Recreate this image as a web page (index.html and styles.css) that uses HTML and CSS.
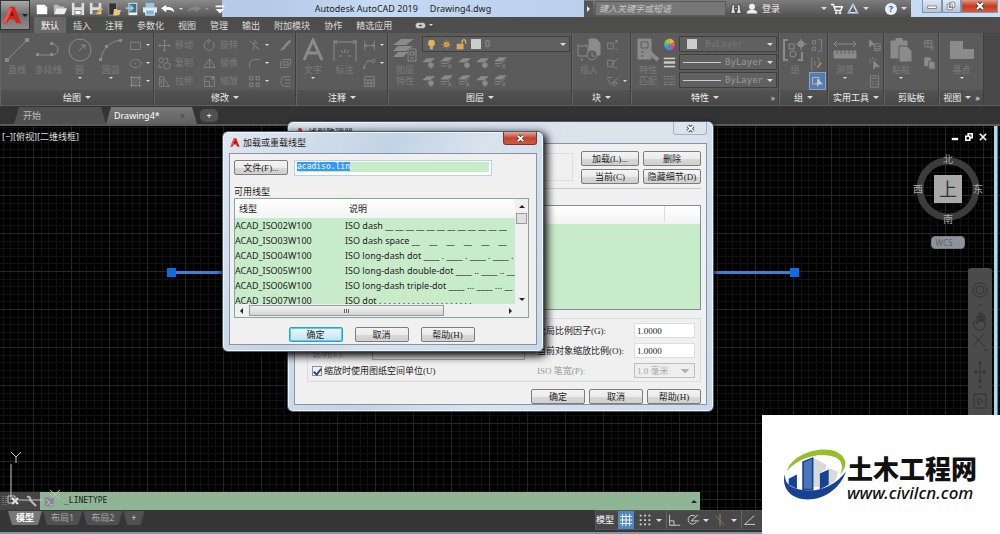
FILE: index.html
```html
<!DOCTYPE html>
<html lang="zh-CN">
<head>
  <meta charset="UTF-8">
  <meta name="viewport" content="width=device-width, initial-scale=1.0">
  <title>Autodesk AutoCAD 2019</title>
  <link rel="stylesheet" href="styles.css">
</head>
<body>
  <!-- icon sprite -->
  <svg class="sprite" aria-hidden="true">
    <symbol id="logo-a" viewBox="0 0 24 24"><path d="M1 22 9 2h6l8 20h-6l-2-5H9l-3 5z" fill="#d3241c"/><path d="M12 7l2 6h-4z" fill="#6b0f0c"/><path d="M9 2 1 22l4-1L12 5z" fill="#f0564a"/></symbol>
    <symbol id="line" viewBox="0 0 24 24"><path d="M2 22 22 2"/><path d="M0 20h4v4H0zM20 0h4v4h-4z" fill="currentColor" stroke="none"/></symbol>
    <symbol id="pline" viewBox="0 0 24 24"><path d="M2 17h14a5 5 0 0 0 1-11"/><path d="M0 15h3v3H0zM14 4h3v3h-3zM14 15h3v3h-3z" fill="currentColor" stroke="none"/></symbol>
    <symbol id="circle" viewBox="0 0 24 24"><circle cx="12" cy="12" r="11"/><path d="M11 13l6-6m-4 0h4v4"/></symbol>
    <symbol id="arc" viewBox="0 0 24 24"><path d="M2 22C3 11 11 3 22 2"/><path d="M0 20h3v3H0zM6 7h3v3H6zM20 1h3v3h-3z" fill="currentColor" stroke="none"/></symbol>
    <symbol id="rect" viewBox="0 0 16 16"><path d="M2 4h12v9H2z"/></symbol>
    <symbol id="ellipse" viewBox="0 0 16 16"><ellipse cx="8" cy="8" rx="7" ry="5"/><path d="M8 7v2"/></symbol>
    <symbol id="hatch" viewBox="0 0 16 16"><path d="M3 3h10v10H3zM1 3h14M1 13h14M3 1v14M13 1v14M4 8l4-4M4 12l8-8M8 12l4-4"/></symbol>
    <symbol id="move" viewBox="0 0 16 16"><path d="M8 1v14M1 8h14M6 3l2-2 2 2M6 13l2 2 2-2M3 6 1 8l2 2M13 6l2 2-2 2"/></symbol>
    <symbol id="rotate" viewBox="0 0 16 16"><path d="M12 4a6 6 0 1 1-5-2M6 0l3 2-3 3"/></symbol>
    <symbol id="trim" viewBox="0 0 16 16"><path d="M2 2l10 10M9 1 7 8M12 5H7M7 9l-1 5M9 9l5 4"/></symbol>
    <symbol id="brush" viewBox="0 0 16 16"><path d="M14 2 7 9" stroke-width="3"/><path d="M6 9l2 2-6 3z" fill="currentColor"/></symbol>
    <symbol id="copy" viewBox="0 0 16 16"><circle cx="4" cy="4" r="3"/><circle cx="11" cy="11" r="4"/><path d="M9 2h3v4M1 9v4h4"/></symbol>
    <symbol id="mirror" viewBox="0 0 16 16"><path d="M8 2v12M7 3 1 13h6M9 3l6 10H9"/></symbol>
    <symbol id="fillet" viewBox="0 0 16 16"><path d="M2 14V9a7 7 0 0 1 7-6h6"/></symbol>
    <symbol id="box" viewBox="0 0 16 16"><path d="M2 6l3-3h9v6l-3 4H2zM5 6h6v4H5z"/></symbol>
    <symbol id="stretch" viewBox="0 0 16 16"><path d="M2 2h5v12H2zM8 5l6 9H8M4 5v6"/></symbol>
    <symbol id="scale" viewBox="0 0 16 16"><path d="M2 2h12v12H2zM2 8h6v6M10 6l3-3M10 3h3v3"/></symbol>
    <symbol id="array" viewBox="0 0 16 16"><path d="M2 2h4v4H2zM10 2h4v4h-4zM2 10h4v4H2zM10 10h4v4h-4z"/></symbol>
    <symbol id="offset" viewBox="0 0 16 16"><path d="M14 2H7C1 2 1 14 7 14h7M14 6H7M14 10H7"/></symbol>
    <symbol id="text" viewBox="0 0 24 24"><path d="M3 22 12 2l9 20M6 15h12" stroke-width="3"/></symbol>
    <symbol id="dim" viewBox="0 0 24 24"><path d="M1 2v21M23 2v21M1 4h22M4 2 1 4l3 2M20 2l3 2-3 2M6 18h3M8 12l2 3M12 11v4M16 12l-2 3M15 18h3"/></symbol>
    <symbol id="dimlin" viewBox="0 0 16 16"><path d="M2 2v12M14 2v12M2 8h12M5 6 2 8l3 2M11 6l3 2-3 2"/></symbol>
    <symbol id="leader" viewBox="0 0 16 16"><path d="M1 14 5 5h6M1 10v4h3"/><circle cx="13" cy="5" r="2"/></symbol>
    <symbol id="grid" viewBox="0 0 16 16"><path d="M2 2h12v12H2zM2 6h12M2 10h12M6 6v8M10 6v8"/></symbol>
    <symbol id="layers" viewBox="0 0 24 24"><path d="M8 1h13l-8 6H0zM5 8h15l-7 5H0zM5 14h10l-5 5H0z" fill="currentColor" stroke="none"/><path d="M15 11h8v12h-8z" fill="#5b5b5b"/><path d="M17 14h4v3h-4zM17 20h4"/></symbol>
    <symbol id="layer" viewBox="0 0 16 16"><path d="M6 1h9l-5 4H1z" fill="currentColor"/><path d="M1 8h8l4-3M1 11h7M10 9l4 5M14 9l-4 5"/></symbol>
    <symbol id="layer2" viewBox="0 0 16 16"><path d="M6 2h9l-5 4H1z" fill="currentColor"/><circle cx="11" cy="10" r="3" fill="currentColor"/><path d="M11 13v2"/></symbol>
    <symbol id="insert" viewBox="0 0 24 24"><path d="M1 8h10v10H1zM1 6v2M9 6v2M5 20v3"/><path d="M12 1h7l4 4v12H12z" fill="currentColor"/><circle cx="15" cy="17" r="5" fill="#5b5b5b"/><path d="M15 14v4h3"/></symbol>
    <symbol id="block" viewBox="0 0 16 16"><path d="M2 5h7v7H2zM11 5l3-3M11 2h3v3M11 12l3 2"/></symbol>
    <symbol id="edit" viewBox="0 0 16 16"><path d="M2 4h7v8H2zM6 10l8-8M10 13h4"/></symbol>
    <symbol id="attr" viewBox="0 0 16 16"><path d="M1 3h7M2 5l4 7 9-9M9 8l5 2-4 4z"/></symbol>
    <symbol id="match" viewBox="0 0 24 24"><path d="M2 1h13v20H2z" fill="currentColor"/><path d="M5 4h7v6H5zM5 14h3M5 18h3" stroke="#5b5b5b"/><path d="M12 13l10 9" stroke-width="4"/></symbol>
    <symbol id="lines" viewBox="0 0 16 16"><path d="M1 3h14" stroke-width="2"/><path d="M1 8h14" stroke-width="3"/><path d="M1 13h14" stroke-width="2"/></symbol>
    <symbol id="dashes" viewBox="0 0 16 16"><path d="M1 3h14M1 6h14" stroke-dasharray="3 1"/><path d="M1 10h14M1 13h14" stroke-dasharray="5 1"/></symbol>
    <symbol id="wheel" viewBox="0 0 16 16"><g stroke="none"><path d="M8 8V1a7 7 0 0 1 6 4z" fill="#ffb02e"/><path d="M8 8l6-3a7 7 0 0 1 0 6z" fill="#f0643c"/><path d="M8 8l6 3a7 7 0 0 1-6 4z" fill="#c04fd0"/><path d="M8 8v7a7 7 0 0 1-6-4z" fill="#3f8fe8"/><path d="M8 8l-6 3a7 7 0 0 1 0-6z" fill="#35c4a0"/><path d="M8 8 2 5a7 7 0 0 1 6-4z" fill="#8ed43a"/></g></symbol>
    <symbol id="group" viewBox="0 0 24 24"><path d="M5 2H1v20h4M15 22h4v-8" stroke-width="2"/><path d="M6 6h5v5H6zM18 1v11M13 6h11"/><circle cx="18" cy="6" r="3" fill="currentColor"/><circle cx="10" cy="16" r="3"/></symbol>
    <symbol id="ungroup" viewBox="0 0 16 16"><path d="M3 2h4v4H3zM3 10h4v4H3zM10 1h4v14h-4"/></symbol>
    <symbol id="gedit" viewBox="0 0 16 16"><path d="M4 1H2v14h2M9 1h2v7M6 4v7"/><path d="M14 7l-5 6" stroke="#a89262" stroke-width="2"/></symbol>
    <symbol id="gsel" viewBox="0 0 16 16"><path d="M2 3h8v8H2z"/><path d="M8 5l6 6H9l-1 3z" fill="currentColor"/></symbol>
    <symbol id="measure" viewBox="0 0 24 24"><path d="M1 6h22M4 3 1 6l3 3M20 3l3 3-3 3"/><path d="M1 13h22v7H1z" fill="currentColor"/><path d="M4 13v3M8 13v3M12 13v3M16 13v3M20 13v3" stroke="#5b5b5b"/></symbol>
    <symbol id="qsel" viewBox="0 0 16 16"><path d="M2 1l6 6H4l-2 3z" fill="currentColor"/><path d="M8 6h7v8H8zM8 9h7M8 12h7"/></symbol>
    <symbol id="pick" viewBox="0 0 16 16"><path d="M7 5l7 7H9l-2 3z" fill="currentColor"/><path d="M6 0v3M1 6h3M2 2l2 2M10 2 9 4"/></symbol>
    <symbol id="calc" viewBox="0 0 16 16"><path d="M3 1h10v14H3zM5 4h6M5 8h2M9 8h2M5 11h2M9 11h2"/></symbol>
    <symbol id="paste" viewBox="0 0 24 24"><path d="M2 3h16v17H2zM7 0h6v4H7z" fill="currentColor"/><path d="M10 8h8l5 5v11H10z" fill="currentColor" stroke="#5b5b5b"/></symbol>
    <symbol id="cut" viewBox="0 0 16 16"><path d="M2 2h9v8H2zM2 5h9M6 2v8M9 9l5 5M14 9l-5 5"/></symbol>
    <symbol id="copyclip" viewBox="0 0 16 16"><path d="M2 1h7v10H2z" fill="currentColor"/><path d="M7 5h5l3 3v7H7z" fill="currentColor" stroke="#5b5b5b"/></symbol>
    <symbol id="base" viewBox="0 0 24 24"><path d="M0 3h13v8h11v10H0z" fill="currentColor" stroke="none"/></symbol>
    <symbol id="close-x" viewBox="0 0 10 10"><path d="M2 2l6 6M8 2 2 8" stroke="#444" stroke-width="4"/><path d="M2 2l6 6M8 2 2 8" stroke="#fff" stroke-width="2"/></symbol>
  </svg>

  <header class="app-header">
    <button class="app-button" aria-label="应用程序菜单"><svg><use href="#logo-a"/></svg><i class="caret dark"></i></button>
    <div class="header-rows">
      <div class="titlebar">
        <div class="quick-access">
          <button aria-label="新建"><svg viewBox="0 0 16 16"><path d="M2 3h9l3 3v8H2z" fill="#fff"/></svg></button>
          <button aria-label="打开"><svg viewBox="0 0 16 16"><path d="M1 3h5l1 2h6v2H4l-3 6z" fill="#bbb"/><path d="M4 7h12l-3 7H1z" fill="#eee"/></svg></button>
          <button aria-label="保存"><svg viewBox="0 0 16 16"><path d="M1 1h14v14H1z" fill="#ddd"/><path d="M4 1h8v5H4zM4 9h8v6H4z" fill="#777"/><path d="M5 10h6v4H5z" fill="#fff"/></svg></button>
          <button aria-label="另存为"><svg viewBox="0 0 16 16"><path d="M1 1h13v13H1z" fill="#ddd"/><path d="M4 1h7v5H4zM4 9h7v5H4z" fill="#777"/><path d="M15 7 9 14" stroke="#e0a850" stroke-width="3"/></svg></button>
          <button aria-label="从移动端打开"><svg viewBox="0 0 16 16"><path d="M2 1h9v14H2z" fill="#333" stroke="#999"/><path d="M8 8h3l1 1h4l-2 6H7z" fill="#efc77c"/></svg></button>
          <button aria-label="保存到移动端"><svg viewBox="0 0 16 16"><path d="M4 1h10v14H4z" fill="#eee"/><path d="M5 2h8v10H5z" fill="#457084"/><path d="M1 7h8M6 4l3 3-3 3" stroke="#8ad0f0" stroke-width="2" fill="none"/></svg></button>
          <button aria-label="打印"><svg viewBox="0 0 16 16"><path d="M3 1h10v5H3z" fill="#8cc6ec"/><path d="M0 6h16v6H0z" fill="#e4e4e4"/><path d="M3 9h10v6H3z" fill="#78b4dc" stroke="#fff"/></svg></button>
          <button aria-label="放弃"><svg viewBox="0 0 16 16"><path d="M6 3v3c6-1 9 2 9 6-2-3-5-3-9-3v3L0 7z" fill="#fff"/></svg></button>
          <i class="caret"></i>
          <button aria-label="重做"><svg viewBox="0 0 16 16"><path d="M10 3v3C4 5 1 8 1 12c2-3 5-3 9-3v3l6-5z" fill="#858585"/></svg></button>
          <i class="caret dim"></i>
          <button aria-label="自定义"><svg viewBox="0 0 16 16"><path d="M3 4h10v2H3zM3 8h10l-5 5z" fill="#fff"/></svg></button>
        </div>
        <div class="app-title"><span>Autodesk AutoCAD 2019</span><span>Drawing4.dwg</span></div>
        <div class="info-center">
          <button class="info-arrow" aria-label="展开"><i class="caret right"></i></button>
          <input class="search" type="text" placeholder="键入关键字或短语" aria-label="搜索">
          <button aria-label="搜索按钮"><svg viewBox="0 0 16 16"><path d="M3 2h3l1 12H1zM10 2h3l2 12H9zM6 6h4v3H6z" fill="#ddd" stroke="#333"/></svg></button>
          <button class="login"><svg viewBox="0 0 16 16"><circle cx="8" cy="5" r="4" fill="#eee"/><path d="M1 14c0-4 3-5 7-5s7 1 7 5z" fill="#eee"/></svg>登录</button>
          <i class="caret push"></i>
          <button aria-label="商店"><svg viewBox="0 0 16 16" fill="none"><path d="M0 2h3l3 8h7l2-5H5" stroke="#fff" stroke-width="2"/><circle cx="7" cy="13" r="2" fill="#ddd"/><circle cx="12" cy="13" r="2" fill="#ddd"/></svg></button>
          <button aria-label="连接"><svg viewBox="0 0 16 16" fill="none"><path d="M8 2 2 13h12z" stroke="#dce6f4" stroke-width="2"/><circle cx="8" cy="3" r="2" fill="#9cb8e0"/><circle cx="3" cy="12" r="2" fill="#9cb8e0"/><circle cx="13" cy="12" r="2" fill="#9cb8e0"/></svg></button>
          <i class="caret"></i>
          <button class="help" aria-label="帮助">?</button>
          <i class="caret"></i>
        </div>
        <div class="window-buttons">
          <button aria-label="最小化"><svg viewBox="0 0 16 16"><path d="M1 8h14v4H1z" fill="#fff" stroke="#555"/></svg></button>
          <button aria-label="还原"><svg viewBox="0 0 16 16"><path d="M6 2h8v8H6zM2 5h8v9H2zM5 8h2v3H5z" fill="#fff" stroke="#555"/></svg></button>
          <button class="close" aria-label="关闭"><svg><use href="#close-x"/></svg></button>
        </div>
      </div>
      <nav class="ribbon-tabs">
        <a href="#" class="active">默认</a><a href="#">插入</a><a href="#">注释</a><a href="#">参数化</a><a href="#">视图</a><a href="#">管理</a><a href="#">输出</a><a href="#">附加模块</a><a href="#">协作</a><a href="#">精选应用</a>
        <button class="tab-toggle" aria-label="最小化功能区"><svg viewBox="0 0 16 10"><path d="M3 1h10l2 3v2l-2 3H3L1 6V4z" fill="#ccc"/><path d="M6 4h4v2H6z" fill="#444"/></svg><i class="caret"></i></button>
      </nav>
    </div>
  </header>

  <div class="ribbon">
    <section class="panel">
      <div class="panel-body">
        <button class="tool"><svg><use href="#line"/></svg>直线</button>
        <button class="tool"><svg><use href="#pline"/></svg>多段线</button>
        <button class="tool"><svg><use href="#circle"/></svg>圆<i class="caret"></i></button>
        <button class="tool"><svg><use href="#arc"/></svg>圆弧<i class="caret"></i></button>
        <div class="stack">
          <button aria-label="矩形"><svg><use href="#rect"/></svg><i class="caret"></i></button>
          <button aria-label="椭圆"><svg><use href="#ellipse"/></svg><i class="caret"></i></button>
          <button aria-label="图案填充"><svg><use href="#hatch"/></svg><i class="caret"></i></button>
        </div>
      </div>
      <h2>绘图<i class="caret"></i></h2>
    </section>
    <section class="panel">
      <div class="panel-body">
        <div class="stack">
          <button><svg><use href="#move"/></svg>移动</button>
          <button><svg><use href="#copy"/></svg>复制</button>
          <button><svg><use href="#stretch"/></svg>拉伸</button>
        </div>
        <div class="stack">
          <button><svg><use href="#rotate"/></svg>旋转</button>
          <button><svg><use href="#mirror"/></svg>镜像</button>
          <button><svg><use href="#scale"/></svg>缩放</button>
        </div>
        <div class="stack">
          <button aria-label="修剪"><svg><use href="#trim"/></svg><i class="caret"></i></button>
          <button aria-label="圆角"><svg><use href="#fillet"/></svg><i class="caret"></i></button>
          <button aria-label="阵列"><svg><use href="#array"/></svg><i class="caret"></i></button>
        </div>
        <div class="stack">
          <button aria-label="删除对象"><svg><use href="#brush"/></svg></button>
          <button aria-label="分解"><svg><use href="#box"/></svg></button>
          <button aria-label="偏移"><svg><use href="#offset"/></svg></button>
        </div>
      </div>
      <h2>修改<i class="caret"></i></h2>
    </section>
    <section class="panel">
      <div class="panel-body">
        <button class="tool"><svg><use href="#text"/></svg>文字<i class="caret"></i></button>
        <button class="tool"><svg><use href="#dim"/></svg>标注</button>
        <div class="stack">
          <button aria-label="线性"><svg><use href="#dimlin"/></svg><i class="caret"></i></button>
          <button aria-label="引线"><svg><use href="#leader"/></svg><i class="caret"></i></button>
          <button aria-label="表格"><svg><use href="#grid"/></svg></button>
        </div>
      </div>
      <h2>注释<i class="caret"></i></h2>
    </section>
    <section class="panel">
      <div class="panel-body">
        <button class="tool"><svg><use href="#layers"/></svg>图层<br>特性</button>
        <div class="layer-tools">
          <button class="combo">
            <svg viewBox="0 0 16 16"><circle cx="8" cy="6" r="5" fill="#e8b24e"/><path d="M6 11h4v4H6z" fill="#bbb"/></svg>
            <svg viewBox="0 0 16 16"><circle cx="8" cy="8" r="4" fill="#e8a040"/><path d="M8 1v14M1 8h14M3 3l10 10M13 3 3 13" stroke="#c89040"/></svg>
            <svg viewBox="0 0 16 16"><path d="M1 7h10v8H1z" fill="#d8a860"/><path d="M9 7V4c0-4 5-4 5 0v3" fill="none" stroke="#d8a860" stroke-width="2"/></svg>
            <i class="swatch"></i><span>0</span><i class="caret"></i>
          </button>
          <div class="icon-row">
            <button aria-label="关"><svg><use href="#layer2"/></svg></button>
            <button aria-label="隔离"><svg><use href="#layer"/></svg></button>
            <button aria-label="冻结"><svg><use href="#layer2"/></svg></button>
            <button aria-label="锁定"><svg><use href="#layer2"/></svg></button>
            <button aria-label="置为当前"><svg><use href="#layer"/></svg></button>
          </div>
          <div class="icon-row">
            <button aria-label="打开所有图层"><svg><use href="#layer2"/></svg></button>
            <button aria-label="取消隔离"><svg><use href="#layer"/></svg></button>
            <button aria-label="解冻"><svg><use href="#layer"/></svg></button>
            <button aria-label="解锁"><svg><use href="#layer2"/></svg></button>
            <button aria-label="匹配图层"><svg><use href="#layer"/></svg></button>
          </div>
        </div>
      </div>
      <h2>图层<i class="caret"></i></h2>
    </section>
    <section class="panel">
      <div class="panel-body">
        <button class="tool"><svg><use href="#insert"/></svg>插入</button>
        <div class="stack">
          <button aria-label="创建块"><svg><use href="#block"/></svg></button>
          <button aria-label="编辑块"><svg><use href="#edit"/></svg></button>
          <button aria-label="编辑属性"><svg><use href="#attr"/></svg><i class="caret"></i></button>
        </div>
      </div>
      <h2>块<i class="caret"></i></h2>
    </section>
    <section class="panel">
      <div class="panel-body">
        <button class="tool"><svg><use href="#match"/></svg>特性<br>匹配</button>
        <div class="props">
          <svg><use href="#wheel"/></svg>
          <button class="combo off"><i class="swatch"></i><span class="mono">ByLayer</span><i class="caret"></i></button>
          <svg class="bright"><use href="#lines"/></svg>
          <button class="combo"><i class="rule"></i><span class="mono">ByLayer</span><i class="caret"></i></button>
          <svg><use href="#dashes"/></svg>
          <button class="combo"><i class="rule"></i><span class="mono">ByLayer</span><i class="caret"></i></button>
        </div>
      </div>
      <h2>特性<i class="caret"></i><i class="launcher">»</i></h2>
    </section>
    <section class="panel">
      <div class="panel-body">
        <button class="tool"><svg><use href="#group"/></svg>组</button>
        <div class="stack">
          <button aria-label="解除编组"><svg><use href="#ungroup"/></svg></button>
          <button aria-label="组编辑"><svg><use href="#gedit"/></svg></button>
          <button class="selected" aria-label="启用组选择"><svg><use href="#gsel"/></svg></button>
        </div>
      </div>
      <h2>组<i class="caret"></i></h2>
    </section>
    <section class="panel">
      <div class="panel-body">
        <button class="tool"><svg><use href="#measure"/></svg>测量<i class="caret"></i></button>
        <div class="stack">
          <button aria-label="快速选择"><svg><use href="#qsel"/></svg></button>
          <button aria-label="点选"><svg><use href="#pick"/></svg></button>
          <button aria-label="计算器"><svg><use href="#calc"/></svg></button>
        </div>
      </div>
      <h2>实用工具<i class="caret"></i></h2>
    </section>
    <section class="panel">
      <div class="panel-body">
        <button class="tool"><svg><use href="#paste"/></svg>粘贴<i class="caret"></i></button>
        <div class="stack">
          <button aria-label="剪切"><svg><use href="#cut"/></svg></button>
          <button aria-label="复制剪裁"><svg><use href="#copyclip"/></svg></button>
        </div>
      </div>
      <h2>剪贴板</h2>
    </section>
    <section class="panel">
      <div class="panel-body center">
        <button class="tool"><svg><use href="#base"/></svg>基点<i class="caret"></i></button>
      </div>
      <h2>视图<i class="caret"></i><span>»</span></h2>
    </section>
  </div>

  <nav class="file-tabs">
    <a href="#" class="file-tab">开始</a>
    <a href="#" class="file-tab active">Drawing4*<span class="tab-x">×</span></a>
    <button class="add-tab" aria-label="新图形">+</button>
  </nav>

  <main class="canvas">
    <div class="view-label">[−][俯视][二维线框]</div>
    <div class="drawn-line"><i class="grip"></i><i class="grip"></i></div>

    <div class="doc-buttons">
      <button aria-label="最小化图形"><svg viewBox="0 0 10 10"><path d="M1 6h8v3H1z" fill="#fff"/></svg></button>
      <button aria-label="还原图形"><svg viewBox="0 0 10 10"><path d="M1 4h5v5H1zM4 4V1h5v5H6" fill="none" stroke="#fff" stroke-width="2"/></svg></button>
      <button aria-label="关闭图形"><svg viewBox="0 0 10 10"><path d="M1 1l8 8M9 1 1 9" stroke="#fff" stroke-width="2"/></svg></button>
    </div>
    <div class="viewcube">
      <svg viewBox="0 0 76 76">
        <circle cx="38" cy="38" r="28" fill="none" stroke="#3c3c3c" stroke-width="7"/>
        <path d="M24 24h28v28H24z" fill="#a9a9a9"/>
        <text x="38" y="45" class="cube-face">上</text>
        <text x="38" y="12" class="cube-dir">北</text>
        <text x="38" y="72" class="cube-dir">南</text>
        <text x="8" y="42" class="cube-dir">西</text>
        <text x="68" y="42" class="cube-dir">东</text>
      </svg>
      <button class="wcs">WCS</button>
    </div>
    <div class="navbar">
      <svg viewBox="0 0 24 148" fill="none" stroke="#333">
        <circle cx="12" cy="22" r="7"/><circle cx="12" cy="22" r="4"/>
        <path d="M11 37h3M7 60c-3-5-2-8 1-6l1 2V48h2v6-9h2v9-8h2v8-6h2v10l-3 4H10z"/>
        <path d="M5 67l12 12M16 66 5 78M16 82h4M12 93v22M6 104h12M10 96l2-3 2 3M10 112l2 3 2-3M9 102l-3 2 3 2M15 102l3 2-3 2M10 119h4M6 126h12v14H6zM10 130l5 3-5 4z"/>
      </svg>
    </div>
    <div class="edge-strip"></div>

    <svg class="ucs" viewBox="0 0 70 60" fill="none" stroke="#c6c6c6">
      <path d="M11 14v36M8 46h7v7H8zM15 50h28M11 2l5 5 5-5M16 7v6M50 40l10 9M60 40l-10 9"/>
    </svg>
    <form class="command-line">
      <div class="command-tools">
        <svg viewBox="0 0 40 18"><path d="M3 4v10M6 4v10" stroke="#999" stroke-dasharray="1 1"/><path d="M12 6l6 6M18 6l-6 6" stroke="#eee" stroke-width="2"/><path d="M27 5c3-1 4 2 3 3l6 6" fill="none" stroke="#bbb" stroke-width="2"/></svg>
      </div>
      <svg class="prompt" viewBox="0 0 16 16"><path d="M1 3h11v11H1z" fill="#8a8597"/><path d="M3 6l4 3-4 3M7 12h4" fill="none" stroke="#ddd"/></svg>
      <input type="text" class="mono" aria-label="命令行" value="_LINETYPE">
      <i class="caret up"></i>
    </form>
  </main>

  <footer class="bottom-bar">
    <nav class="layout-tabs">
      <a href="#" class="active">模型</a><a href="#">布局1</a><a href="#">布局2</a><button aria-label="新建布局">+</button>
    </nav>
    <div class="status">
      <button>模型</button>
      <button class="on" aria-label="栅格"><svg viewBox="0 0 16 16"><path d="M4 1v14M8 1v14M12 1v14M1 4h14M1 8h14M1 12h14" stroke="#fff"/></svg></button>
      <button aria-label="捕捉"><svg viewBox="0 0 16 16"><path d="M2 3h12M2 8h12M2 13h12" stroke="#ddd" stroke-width="2" stroke-dasharray="2 3"/></svg></button>
      <i class="caret"></i>
      <button class="sep" aria-label="正交"><svg viewBox="0 0 16 16"><path d="M3 2v12h12M3 9h5v5" fill="none" stroke="#ddd"/></svg></button>
      <button aria-label="极轴"><svg viewBox="0 0 16 16"><path d="M12 4a5 5 0 1 0 1 6M7 9l8-7M7 9h9" fill="none" stroke="#ddd"/></svg></button>
      <i class="caret"></i>
      <button aria-label="等轴测"><svg viewBox="0 0 16 16"><path d="M8 1v14" stroke="#5cb464"/><path d="M3 3l10 11" stroke="#cf5a5a"/></svg></button>
      <i class="caret"></i>
      <button class="sep" aria-label="对象捕捉追踪"><svg viewBox="0 0 16 16"><path d="M14 3 3 13h12" fill="none" stroke="#ddd"/></svg></button>
    </div>
  </footer>

  <div class="dialog manager" role="dialog" aria-label="线型管理器">
    <div class="dialog-title"><svg><use href="#logo-a"/></svg>线型管理器<button class="dialog-close plain" aria-label="关闭管理器"><svg><use href="#close-x"/></svg></button></div>
    <div class="dialog-body">
      <div class="manager-top">
        <div class="filter-box"></div>
        <div class="manager-buttons">
          <button class="btn">加载(L)...</button><button class="btn">删除</button>
          <button class="btn">当前(C)</button><button class="btn">隐藏细节(D)</button>
        </div>
      </div>
      <div class="current-type"></div>
      <div class="type-list"><div class="type-list-head"><span></span></div></div>
      <div class="details">
        <div class="details-left">
          <div class="desc-row"><label for="desc">说明(E):</label><input id="desc" type="text" disabled></div>
          <label class="check"><input type="checkbox" checked>缩放时使用图纸空间单位(U)</label>
        </div>
        <div class="details-right">
          <label for="global">全局比例因子(G):</label><input id="global" type="text" value="1.0000">
          <label for="current">当前对象缩放比例(O):</label><input id="current" type="text" value="1.0000">
          <label for="pen" class="off">ISO 笔宽(P):</label><select id="pen" disabled><option>1.0 毫米</option></select>
        </div>
      </div>
      <div class="manager-actions"><button class="btn">确定</button><button class="btn">取消</button><button class="btn">帮助(H)</button></div>
    </div>
  </div>

  <div class="dialog loader" role="dialog" aria-label="加载或重载线型">
    <div class="dialog-title"><svg><use href="#logo-a"/></svg>加载或重载线型<button class="dialog-close" aria-label="关闭对话框"><svg><use href="#close-x"/></svg></button></div>
    <div class="dialog-body">
      <div class="file-row">
        <button class="btn">文件(F)...</button>
        <input class="file-field mono" type="text" aria-label="文件" value="acadiso.lin">
      </div>
      <div class="list-label">可用线型</div>
      <div class="list">
        <div class="list-view">
          <table>
            <thead><tr><th>线型</th><th>说明</th></tr></thead>
            <tbody>
              <tr><td>ACAD_ISO02W100</td><td>ISO dash __ __ __ __ __ __ __ __ __ __ __ __</td></tr>
              <tr><td>ACAD_ISO03W100</td><td>ISO dash space __    __    __    __    __    __</td></tr>
              <tr><td>ACAD_ISO04W100</td><td>ISO long-dash dot ____ . ____ . ____ . ____ .</td></tr>
              <tr><td>ACAD_ISO05W100</td><td>ISO long-dash double-dot ____ .. ____ .. __</td></tr>
              <tr><td>ACAD_ISO06W100</td><td>ISO long-dash triple-dot ____ ... ____ ... __</td></tr>
              <tr><td>ACAD_ISO07W100</td><td>ISO dot . . . . . . . . . . . . . . . . . . . .</td></tr>
            </tbody>
          </table>
        </div>
        <div class="vscroll"><i class="caret up"></i><i class="thumb"></i><i class="caret dark"></i></div>
        <div class="hscroll"><i class="caret left"></i><i class="thumb"></i><i class="caret right dark"></i></div>
      </div>
      <div class="loader-actions"><button class="btn default">确定</button><button class="btn">取消</button><button class="btn">帮助(H)</button></div>
    </div>
  </div>

  <div class="watermark">
    <svg viewBox="580 110 190 160">
      <path d="M592 180C606 128 700 98 748 125c28 18 24 45 4 66 10-23 8-41-12-52-45-20-116 0-148 41z" fill="#94be2a"/>
      <path d="M672 140l38 20v14l-20 12v42h-18zM718 170l28 12-6 24-22 20z" fill="#d7d9dc"/>
      <path d="M586 187c-12 38 12 72 57 78 55 5 107-28 127-84-30 40-75 60-117 57-42-2-71-16-67-51z" fill="#174191"/>
      <path d="M638 151l34-14v101h-34zM597 203l25-13v44l-25-14zM691 187l27-12v46l-27 14z" fill="#174191"/>
      <path d="M643 153l24-10v90h-24z" fill="#4a76ba"/>
    </svg>
    <div class="watermark-text"><strong>土木工程网</strong><em>www.civilcn.com</em></div>
  </div>

  <script>
    // the file name starts selected, like in the real dialog
    document.querySelector('.file-field').select();
  </script>
</body>
</html>
```
FILE: styles.css
```css
* {
  box-sizing: border-box;
}

body {
  margin: 0;
  height: 100vh;
  display: flex;
  flex-direction: column;
  position: relative;
  overflow: hidden;
  background: #333;
  color: #ddd;
  font: 9px/12px "Noto Sans", "Noto Sans CJK SC", sans-serif;
}

button, input, select {
  font: inherit;
  color: inherit;
  margin: 0;
  padding: 0;
  border: 0;
  background: none;
}

button {
  display: flex;
  align-items: center;
  justify-content: center;
}

a {
  color: inherit;
  text-decoration: none;
}

i {
  font-style: normal;
}

svg {
  display: block;
  flex: none;
}

.sprite {
  position: absolute;
  width: 0;
  height: 0;
}

.mono {
  font-family: "DejaVu Sans Mono", monospace;
}

.caret {
  flex: none;
  border: 3px solid transparent;
  border-top-color: #ddd;
  border-bottom: 0;
}

.caret.dim { border-top-color: #999; }
.caret.dark { border-top-color: #222; }
.caret.up { border: 3px solid transparent; border-top: 0; border-bottom-color: #222; }
.caret.left { border: 3px solid transparent; border-left: 0; border-right-color: #222; }
.caret.right { border: 3px solid transparent; border-right: 0; border-left-color: #eee; }
.caret.right.dark { border-left-color: #222; }

/* title bar */
.app-header {
  display: flex;
  flex: none;
  height: 33px;
  background: #4d4d4b;
}

.app-button {
  width: 30px;
  height: 30px;
  border: 1px solid #333;
  background: linear-gradient(#a9a9a9, #6d6d6d 50%, #8f8f8f);
}

.app-button svg {
  width: 20px;
  height: 24px;
}

.header-rows {
  flex: 1;
  min-width: 0;
}

.titlebar {
  display: flex;
  height: 17px;
  background: linear-gradient(90deg, #b5cbe6, #b5cbe6 25%, #c4d9f2 35%, #b9cfea 60%, #c9def5);
}

.quick-access {
  display: flex;
  align-items: center;
  gap: 4px;
  width: 192px;
  padding-left: 5px;
  background: linear-gradient(#8a8a8a, #555);
}

.quick-access svg {
  width: 14px;
  height: 14px;
}

.quick-access .caret {
  border-width: 2px;
  border-bottom: 0;
}

.app-title {
  flex: 1;
  display: flex;
  align-items: center;
  justify-content: center;
  gap: 12px;
  color: #222;
  white-space: nowrap;
}

.info-center {
  display: flex;
  align-items: center;
  gap: 4px;
  width: 327px;
  padding-right: 4px;
  background: linear-gradient(#7c7c7c, #505050);
}

.info-center svg {
  width: 12px;
  height: 12px;
}

.info-arrow {
  width: 9px;
  height: 16px;
  background: #555;
}

.search {
  width: 131px;
  height: 15px;
  margin-left: -2px;
  padding-left: 3px;
  background: #777;
  border: 1px solid #5a5a5a;
  font-style: italic;
}

.search::placeholder {
  color: #c8c8c8;
}

.login {
  gap: 4px;
  color: #eee;
}

.push {
  margin-left: auto;
}

.help {
  width: 12px;
  height: 12px;
  margin-left: 12px;
  border-radius: 50%;
  background: #e6eef8;
  color: #2c5f9e;
  font-weight: bold;
}

.window-buttons {
  display: flex;
  width: 89px;
  height: 13px;
  padding: 0 2px 0 11px;
}

.window-buttons button {
  flex: 1;
  border: 1px solid #8095ae;
  border-top: 0;
  background: linear-gradient(#dde8f4, #b4c5d9);
}

.window-buttons .close {
  flex: 2;
  background: linear-gradient(#e09a88, #c43c22 50%, #d8593b);
}

.window-buttons svg {
  width: 10px;
  height: 10px;
}

/* ribbon */
.ribbon-tabs {
  display: flex;
  height: 16px;
  padding-left: 4px;
  line-height: 17px;
}

.ribbon-tabs a {
  padding: 0 7px;
}

.ribbon-tabs .active {
  background: #686868;
  color: #fff;
}

.tab-toggle {
  gap: 3px;
  margin-left: 16px;
}

.tab-toggle svg {
  width: 11px;
  height: 7px;
}

.tab-toggle .caret {
  border-width: 2px;
  border-bottom: 0;
}

.ribbon {
  display: grid;
  grid-template-columns: 154fr 142fr 92fr 184fr 59fr 148fr 49fr 56fr 55fr 45fr 16fr;
  flex: none;
  height: 73px;
  border-bottom: 1px solid #5f5f5f;
  background: #484848;
}

.panel {
  display: flex;
  flex-direction: column;
  min-width: 0;
  border-right: 1px solid #3e3e3e;
  border-left: 1px solid #656565;
  background: #5b5b5b;
  color: #7b7b7b;
}

.panel svg {
  fill: none;
  stroke: currentColor;
  color: #8b8b8b;
}

.panel h2 {
  position: relative;
  display: flex;
  align-items: center;
  justify-content: center;
  gap: 4px;
  height: 15px;
  margin: 0;
  background: linear-gradient(#525252, #484848);
  color: #eee;
  font-size: 9px;
  font-weight: normal;
  white-space: nowrap;
}

.launcher {
  position: absolute;
  right: 3px;
  color: #ccc;
}

.panel-body {
  display: flex;
  flex: 1;
  padding: 3px 1px 0;
  min-height: 0;
  justify-content: space-between;
}

.panel-body.center {
  justify-content: center;
}

.tool {
  flex-direction: column;
  justify-content: flex-start;
  width: 30px;
  line-height: 11px;
  padding-top: 2px;
  white-space: nowrap;
}

.tool svg {
  width: 24px;
  height: 24px;
  margin-bottom: 2px;
}

.panel-body .caret {
  border-width: 2px;
  border-bottom: 0;
}

.tool .caret {
  margin-top: 2px;
}

.stack {
  display: flex;
  flex-direction: column;
}

.stack button {
  gap: 4px;
  height: 18px;
  padding: 0 2px;
  justify-content: flex-start;
}

.stack svg {
  width: 13px;
  height: 13px;
}

.stack .selected {
  background: #5a7ba6;
  border: 1px solid #86a6cf;
}

.stack .selected svg {
  color: #b9cce4;
}

.panel:nth-child(n+7) .stack button {
  padding: 0 1px;
}

.layer-tools {
  flex: 1;
  margin-left: 2px;
}

.combo {
  width: 100%;
  height: 16px;
  gap: 4px;
  padding: 0 3px;
  border: 1px solid #3f3f3f;
  background: #606060;
  justify-content: flex-start;
  color: #999;
}

.combo svg {
  width: 11px;
  height: 11px;
  stroke: none;
}

.combo .caret {
  margin-left: auto;
  border-width: 3px;
  border-bottom: 0;
}

.combo.off {
  color: #777;
}

.swatch {
  width: 10px;
  height: 10px;
  background: #ccc;
}

.icon-row {
  display: flex;
  gap: 5px;
  padding-top: 5px;
}

.icon-row svg {
  width: 13px;
  height: 13px;
}

.props {
  flex: 1;
  display: grid;
  grid-template-columns: 14px 1fr;
  gap: 2px;
  align-content: start;
  align-items: center;
}

.props > svg {
  width: 13px;
  height: 13px;
}

.props .bright {
  color: #ccc;
}

.props .off .swatch {
  margin: 0 4px;
}

.rule {
  flex: 1;
  height: 1px;
  background: #ccc;
}

/* drawing tabs */
.file-tabs {
  display: flex;
  flex: none;
  align-items: flex-end;
  height: 20px;
  padding-left: 14px;
  border-bottom: 2px solid #5a5a5a;
  background: #333;
}

.file-tab {
  width: 92px;
  height: 17px;
  padding: 3px 0 0 9px;
  border-radius: 4px 4px 0 0;
  clip-path: polygon(5px 0, calc(100% - 5px) 0, 100% 100%, 0 100%);
  background: #505050;
  color: #bbb;
}

.file-tab.active {
  display: flex;
  justify-content: space-between;
  width: 91px;
  padding: 3px 12px 0 8px;
  background: linear-gradient(#777, #606060);
  color: #fff;
}

.tab-x {
  color: #444;
}

.add-tab {
  width: 18px;
  height: 13px;
  margin: 0 0 2px 3px;
  border-radius: 5px;
  background: #505050;
  font-weight: bold;
}

/* drawing area */
.canvas {
  flex: 1;
  position: relative;
  min-height: 0;
  background:
    linear-gradient(90deg, #262626 1px, transparent 1px) 33px 0 / 38px 38px,
    linear-gradient(#262626 1px, transparent 1px) 0 31px / 38px 38px,
    linear-gradient(90deg, transparent 8px, #111 8px 9px, transparent 9px 15px, #111 15px 16px, transparent 16px 23px, #111 23px 24px, transparent 24px 30px, #111 30px 31px, transparent 31px) 33px 0 / 38px 38px,
    linear-gradient(transparent 8px, #111 8px 9px, transparent 9px 15px, #111 15px 16px, transparent 16px 23px, #111 23px 24px, transparent 24px 30px, #111 30px 31px, transparent 31px) 0 31px / 38px 38px,
    #000;
}

.view-label {
  padding: 5px 2px;
}

.drawn-line {
  position: absolute;
  top: 145px;
  left: 171px;
  right: 205px;
  height: 3px;
  background: #3f7fdc;
}

.grip {
  position: absolute;
  top: -3px;
  left: -4px;
  width: 9px;
  height: 9px;
  background: #0a6fe0;
}

.grip + .grip {
  left: auto;
  right: -4px;
}

.doc-buttons {
  position: absolute;
  top: 7px;
  right: 13px;
  display: flex;
  gap: 6px;
}

.doc-buttons svg {
  width: 8px;
  height: 8px;
}

.viewcube {
  position: absolute;
  top: 25px;
  right: 14px;
  width: 76px;
}

.cube-dir, .cube-face {
  fill: #aaa;
  font-size: 10px;
  text-anchor: middle;
}

.cube-face {
  fill: #333;
  font-size: 18px;
}

.wcs {
  width: 34px;
  height: 13px;
  margin: 9px 0 0 21px;
  border-radius: 4px;
  border: 1px solid #777c88;
  background: #8f929c;
  color: #5e636f;
  font-size: 8px;
  padding-right: 8px;
}

.navbar {
  position: absolute;
  top: 142px;
  right: 8px;
  width: 24px;
  height: 152px;
  border-radius: 3px;
  background: #4b4b4b;
}

.navbar svg {
  width: 24px;
  height: 148px;
}

.edge-strip {
  position: absolute;
  top: 0;
  right: 2px;
  bottom: 0;
  width: 4px;
  border-right: 1px solid #3f8ca5;
  background: #b7d6ea;
}

.ucs {
  position: absolute;
  left: 0;
  bottom: 0;
  z-index: 1;
  width: 70px;
  height: 60px;
}

.command-line {
  position: absolute;
  left: 0;
  bottom: 0;
  display: flex;
  align-items: center;
  gap: 4px;
  width: 70%;
  height: 18px;
  padding-right: 3px;
  background: #8fb595;
}

.command-line .mono {
  flex: 1;
  padding-left: 3px;
  color: #222;
  font-size: 8px;
}

.command-tools {
  width: 40px;
  height: 18px;
  background: #454545;
}

.prompt {
  width: 13px;
  height: 13px;
}

/* layout tabs and status bar */
.bottom-bar {
  display: flex;
  flex: none;
  justify-content: space-between;
  height: 24px;
  border-bottom: 2px solid #8596a8;
  background: #363636;
}

.layout-tabs {
  display: flex;
  align-items: flex-start;
  gap: 1px;
  padding: 1px 0 0 8px;
}

.layout-tabs a, .layout-tabs button {
  height: 14px;
  padding: 0 8px;
  border-radius: 0 0 5px 5px;
  clip-path: polygon(0 0, 100% 0, calc(100% - 4px) 100%, 4px 100%);
  background: #505050;
  color: #aaa;
  line-height: 14px;
}

.layout-tabs .active {
  background: #777;
  color: #fff;
  font-weight: bold;
}

.layout-tabs button {
  color: #ddd;
}

.status {
  display: flex;
  align-items: center;
  gap: 4px;
  width: 405px;
  height: 20px;
  background: #484848;
  border: 1px solid #555;
}

.status button {
  height: 18px;
  color: #fff;
}

.status svg {
  width: 14px;
  height: 14px;
}

.status .on {
  padding: 0 1px;
  background: #4f86c4;
}

.status .sep {
  border-left: 1px solid #666;
}

/* dialogs */
.dialog {
  position: absolute;
  display: flex;
  flex-direction: column;
  padding: 0 6px 6px;
  border: 1px solid #4c5b6b;
  border-radius: 6px;
  background: linear-gradient(120deg, #dfe7ef, #c3d3e5 40%, #d9e3ee 60%, #c9d8e8);
  box-shadow: inset 0 0 0 1px #eef4fa, 1px 2px 6px rgba(0, 0, 0, 0.7);
  color: #222;
  font-family: "Liberation Serif", "Noto Sans CJK SC", serif;
}

.dialog-title {
  display: flex;
  align-items: center;
  gap: 3px;
  height: 21px;
  padding-left: 1px;
}

.dialog-title > svg {
  width: 10px;
  height: 11px;
}

.dialog-close {
  width: 34px;
  height: 13px;
  margin-left: auto;
  align-self: flex-start;
  border: 1px solid #6d3a36;
  border-top: 0;
  border-radius: 0 0 3px 3px;
  background: linear-gradient(#e3a79c, #c4452f 50%, #cf5b43);
}

.dialog-close.plain {
  border-color: #a3b1c2;
  background: #dbe3ec;
}

.dialog-close svg {
  width: 9px;
  height: 9px;
}

.dialog-body {
  flex: 1;
  border: 1px solid #8794a3;
  background: #f0f0f0;
}

.btn {
  width: 54px;
  height: 15px;
  border: 1px solid #7d7d7d;
  border-radius: 2px;
  background: linear-gradient(#f4f4f4, #ebebeb 50%, #d8d8d8 51%, #d0d0d0);
  white-space: nowrap;
}

.btn.default {
  border-color: #2f9fd0;
  box-shadow: inset 0 0 0 1px #4fd0f4;
  background: linear-gradient(#eef7fb, #c5e2ef);
}

.manager {
  top: 121px;
  left: 287px;
  width: 427px;
  height: 291px;
}

.manager .dialog-title {
  background: linear-gradient(90deg, transparent, #dbe3ec 70%);
}

.manager .dialog-body {
  padding: 7px 5px 0 12px;
}

.manager-top {
  display: flex;
  justify-content: space-between;
}

.filter-box {
  width: 266px;
  height: 28px;
  margin-top: 2px;
  border: 1px solid #ddd;
}

.manager-buttons {
  display: grid;
  grid-template-columns: 58px 58px;
  gap: 3px 4px;
}

.manager-buttons .btn {
  width: 58px;
}

.current-type {
  height: 17px;
  margin-top: 4px;
  border-top: 1px solid #ccc;
}

.type-list {
  height: 105px;
  border: 1px solid #828f9b;
  background: #c8ecca;
}

.type-list-head {
  height: 18px;
  background: linear-gradient(#fff, #f3f3f3);
}

.type-list-head span {
  display: block;
  width: 36px;
  height: 16px;
  margin-left: auto;
  border-left: 1px solid #ddd;
}

.details {
  display: flex;
  justify-content: space-between;
  height: 64px;
  margin-top: 8px;
  padding: 4px 5px 0 4px;
  border: 1px solid #dcdcdc;
}

.details-left {
  display: flex;
  flex-direction: column;
  justify-content: flex-end;
  gap: 5px;
  padding-bottom: 4px;
}

.desc-row {
  display: flex;
  align-items: center;
  gap: 28px;
  color: #999;
}

.desc-row input {
  width: 153px;
  height: 13px;
  border: 1px solid #aaa;
}

.check {
  display: flex;
  align-items: center;
  gap: 2px;
}

.check input {
  appearance: none;
  width: 10px;
  height: 10px;
  border: 1px solid #8591a3;
  background: #eef1f5;
}

.check input:checked::after {
  content: "";
  display: block;
  width: 3px;
  height: 6px;
  margin: 0 0 0 2px;
  border: solid #3b4a78;
  border-width: 0 2px 2px 0;
  transform: rotate(40deg);
}

.details-right {
  display: grid;
  grid-template-columns: 97px 61px;
  gap: 5px 0;
  align-content: start;
  align-items: center;
  white-space: nowrap;
}

.details-right input, .details-right select {
  height: 15px;
  padding: 0 2px;
  border: 1px solid #ddd;
  background: #fff;
}

.details-right select {
  appearance: none;
  border-color: #aaa;
  background:
    linear-gradient(to bottom right, #999 50%, transparent 51%) right 5px center / 4px 4px no-repeat,
    linear-gradient(to bottom left, #999 50%, transparent 51%) right 9px center / 4px 4px no-repeat,
    #eee;
  color: #888;
}

.details-right .off {
  color: #999;
}

.manager-actions, .loader-actions {
  display: flex;
  justify-content: flex-end;
  gap: 4px;
  margin-top: 7px;
}

.loader {
  top: 131px;
  left: 222px;
  width: 322px;
  height: 221px;
  box-shadow: inset 0 0 0 1px #eef4fa, 2px 3px 8px 1px #000;
}

.loader .dialog-body {
  padding: 6px 7px 0 4px;
}

.file-row {
  display: flex;
  gap: 6px;
}

.file-field {
  width: 198px;
  height: 16px;
  padding: 0 2px 3px;
  border: 1px solid #b3d3e8;
  outline: none;
  background: linear-gradient(#c8ecca, #c8ecca) 2px 1px / 192px 10px no-repeat #fff;
  font-size: 8px;
}

.file-field::selection {
  background: #3399ff;
  color: #fff;
}

.list-label {
  height: 22px;
  padding-top: 10px;
}

.list {
  display: grid;
  grid-template: 1fr 13px / 1fr 13px;
  height: 120px;
  border: 1px solid #86a896;
  background: #f0f0f0;
}

.list-view {
  overflow: hidden;
  background: #c8ecca;
  font-family: "Noto Sans", "Noto Sans CJK SC", sans-serif;
}

.list table {
  width: 100%;
  border-collapse: collapse;
  table-layout: fixed;
}

.list th, .list td {
  height: 15px;
  padding: 0;
  font-weight: normal;
  text-align: left;
  white-space: pre;
}

.list th {
  height: 19px;
  padding-left: 4px;
  background: linear-gradient(#fff, #f4f4f4);
}

.list th:first-child {
  width: 110px;
}

.vscroll {
  display: flex;
  flex-direction: column;
  align-items: center;
  padding: 6px 0 3px;
}

.vscroll .thumb {
  width: 11px;
  height: 11px;
  margin: 5px 0 auto;
  border: 1px solid #999;
  background: #e0e0e0;
}

.hscroll {
  display: flex;
  align-items: center;
  padding: 0 3px 0 5px;
}

.hscroll .thumb {
  width: 195px;
  height: 11px;
  margin: 0 auto 0 6px;
  border: 1px solid #999;
  background:
    repeating-linear-gradient(90deg, #666 0 1px, transparent 1px 2px) center / 5px 4px no-repeat,
    linear-gradient(#f2f2f2, #d4d4d4);
}

.loader-actions {
  justify-content: center;
  gap: 12px;
  margin-top: 9px;
}

/* site mark */
.watermark {
  position: absolute;
  right: 0;
  bottom: 0;
  z-index: 2;
  display: flex;
  align-items: center;
  width: 238px;
  height: 119px;
  padding-left: 21px;
  background: #fff;
  color: #111;
}

.watermark svg {
  width: 63px;
  height: 53px;
}

.watermark-text {
  display: flex;
  flex-direction: column;
  padding: 6px 0 0 1px;
}

.watermark strong {
  font-size: 26px;
  font-weight: 900;
  line-height: 30px;
  white-space: nowrap;
}

.watermark em {
  font-size: 17px;
  font-weight: 500;
  line-height: 18px;
}
```
